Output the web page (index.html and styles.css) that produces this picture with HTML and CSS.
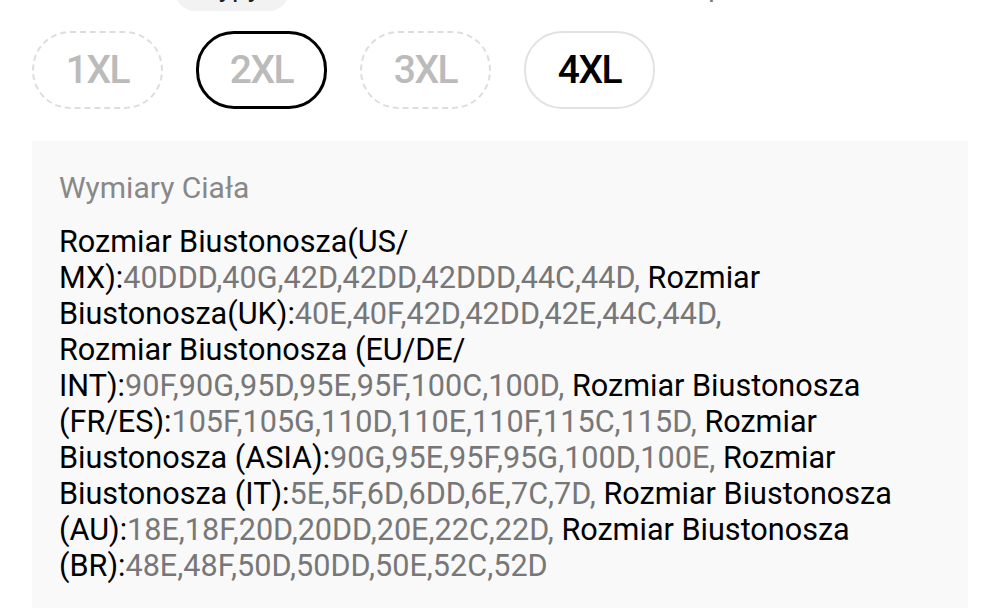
FILE: index.html
```html
<!DOCTYPE html>
<html lang="pl">
<head>
    <meta charset="UTF-8">
    <meta name="viewport" content="width=device-width, initial-scale=1.0">
    <title>Rozmiar</title>
    <link rel="stylesheet" href="styles.css">
</head>
<body>
    <div class="top-row">
        <span class="ghost">,</span>
        <span class="ghost">,</span>
        <span class="pill">Typy</span>
        <span class="hint">Opis</span>
    </div>

    <div class="sizes">
        <div class="size size-out">1XL</div>
        <div class="size size-out size-picked">2XL</div>
        <div class="size size-out">3XL</div>
        <div class="size">4XL</div>
    </div>

    <div class="measures">
        <div class="measures-title">Wymiary Ciała</div>
        <p class="measures-text">
            <b>Rozmiar Biustonosza(US/</b><br>
            <b>MX):</b><i>40DDD,40G,42D,42DD,42DDD,44C,44D,</i> <b>Rozmiar</b><br>
            <b>Biustonosza(UK):</b><i>40E,40F,42D,42DD,42E,44C,44D,</i><br>
            <b>Rozmiar Biustonosza (EU/DE/</b><br>
            <b>INT):</b><i>90F,90G,95D,95E,95F,100C,100D,</i> <b>Rozmiar Biustonosza</b><br>
            <b>(FR/ES):</b><i>105F,105G,110D,110E,110F,115C,115D,</i> <b>Rozmiar</b><br>
            <b>Biustonosza (ASIA):</b><i>90G,95E,95F,95G,100D,100E,</i> <b>Rozmiar</b><br>
            <b>Biustonosza (IT):</b><i>5E,5F,6D,6DD,6E,7C,7D,</i> <b>Rozmiar Biustonosza</b><br>
            <b>(AU):</b><i>18E,18F,20D,20DD,20E,22C,22D,</i> <b>Rozmiar Biustonosza</b><br>
            <b>(BR):</b><i>48E,48F,50D,50DD,50E,52C,52D</i>
        </p>
    </div>
</body>
</html>
```

FILE: styles.css
```css
body {
    margin: 0;
    background: #fff;
    font-family: Roboto, "Noto Sans", sans-serif;
    color: #000;
    overflow: hidden;
}

/* row above, scrolled mostly out of view */
.top-row {
    display: flex;
    align-items: flex-start;
    height: 40px;
    margin-top: -29px;
    font-size: 28px;
    line-height: 32px;
}
.ghost {
    color: #ddd;
    margin-left: 56px;
    margin-right: 14px;
}
.ghost + .ghost {
    margin-left: 60px;
}
.pill {
    display: flex;
    justify-content: center;
    box-sizing: border-box;
    width: 114px;
    height: 40px;
    border-radius: 20px;
    background: #f2f2f2;
    color: #222;
    margin-left: 20px;
}
.hint {
    color: #777;
    margin-left: 400px;
}

.sizes {
    display: flex;
    gap: 33px;
    padding: 0 32px;
    margin-top: 20px;
}
.size {
    width: 131px;
    height: 78px;
    box-sizing: border-box;
    border: 2px solid #e2e2e2;
    border-radius: 38px;
    display: flex;
    align-items: center;
    justify-content: center;
    font-size: 39px;
    font-weight: 500;
    letter-spacing: -1.5px;
    color: #000;
}
.size-out {
    border: 2px dashed #ddd;
    color: #bbb;
}
.size-picked {
    border: 3px solid #000;
}

.measures {
    margin: 32px 32px 0;
    padding: 29px 27px 40px;
    background: #f9f9f9;
    min-height: 400px;
}
.measures-title {
    font-size: 30px;
    line-height: 36px;
    color: #888;
}
.measures-text {
    margin: 18px 0 0;
    font-size: 30.6px;
    line-height: 36px;
    white-space: nowrap;
}
.measures-text b {
    font-weight: 400;
    color: #000;
}
.measures-text i {
    font-style: normal;
    color: #777;
}
```
